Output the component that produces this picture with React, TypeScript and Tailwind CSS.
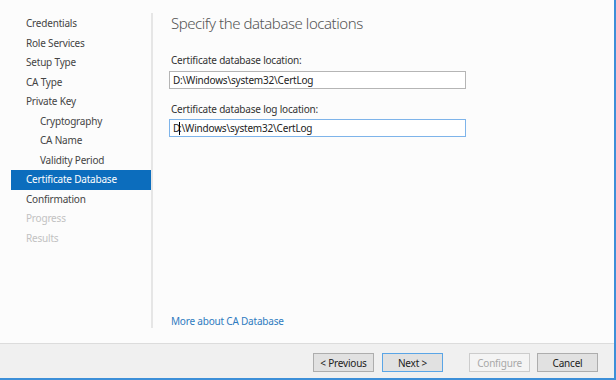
const font = { fontFamily: '"Noto Sans", "Open Sans", sans-serif' };

type NavItem = { label: string; sub?: boolean; active?: boolean; disabled?: boolean };

const navItems: NavItem[] = [
  { label: "Credentials" },
  { label: "Role Services" },
  { label: "Setup Type" },
  { label: "CA Type" },
  { label: "Private Key" },
  { label: "Cryptography", sub: true },
  { label: "CA Name", sub: true },
  { label: "Validity Period", sub: true },
  { label: "Certificate Database", active: true },
  { label: "Confirmation" },
  { label: "Progress", disabled: true },
  { label: "Results", disabled: true },
];

function WizardButton({
  children,
  primary = false,
  disabled = false,
}: {
  children: React.ReactNode;
  primary?: boolean;
  disabled?: boolean;
}) {
  return (
    <button
      className={`flex h-[19px] w-[61px] items-center justify-center border text-[10px] leading-none tracking-[-0.2px] ${
        disabled
          ? "border-[#cccccc] bg-[#f4f4f4] text-[#a8a8a8]"
          : primary
            ? "border-[#5aa5e6] bg-[#e1e1e1] text-[#222]"
            : "border-[#adadad] bg-[#e1e1e1] text-[#222]"
      }`}
    >
      {children}
    </button>
  );
}

export default function App() {
  return (
    <div
      style={font}
      className="flex h-[380px] w-[616px] flex-col overflow-hidden border-b-2 border-r-2 border-[#3d8fd8] bg-[#fcfcfc] tracking-[-0.2px]"
    >
      {/* Main area */}
      <div className="flex h-[343px]">
        {/* Steps */}
        <nav className="w-[151px] pl-[11px] pt-[14px]">
          {navItems.map((item) => (
            <div
              key={item.label}
              className={`flex h-[19.5px] items-center text-[10px] ${item.sub ? "pl-[29px]" : "pl-[15px]"} ${
                item.active
                  ? "bg-[#0c6dbd] text-white"
                  : item.disabled
                    ? "text-[#c2c2c2]"
                    : "text-[#444]"
              }`}
            >
              {item.label}
            </div>
          ))}
        </nav>

        {/* Page content */}
        <div className="mt-[13px] flex h-[315px] w-[297px] flex-col border-l-2 border-[#e6e6e6] pl-[16px]">
          <h1 className="ml-[2px] text-[15px] font-light leading-[20px] tracking-[-0.45px] text-[#555]">
            Specify the database locations
          </h1>

          <label className="ml-[2px] mt-[19px] text-[10px] leading-[16px] text-[#333]">
            Certificate database location:
          </label>
          <div className="mt-[3px] flex h-[18px] w-[297px] shrink-0 items-center border border-[#b5b5b5] bg-white pl-[3px] text-[10px] text-[#222]">
            D:\Windows\system32\CertLog
          </div>

          <label className="ml-[2px] mt-[12px] text-[10px] leading-[16px] text-[#333]">
            Certificate database log location:
          </label>
          <div className="mt-[2px] flex h-[18px] w-[297px] shrink-0 items-center border border-[#7eb4ea] bg-white pl-[3px] text-[10px] text-[#222]">
            <span>D</span>
            <span className="mx-[-1px] h-[13px] w-px bg-black" />
            <span>:\Windows\system32\CertLog</span>
          </div>

          <a className="ml-[2px] mt-auto text-[10px] leading-[14px] text-[#2e7bc0]" href="#">
            More about CA Database
          </a>
        </div>
      </div>

      {/* Footer */}
      <div className="flex flex-1 justify-end border-t border-[#dcdcdc] bg-[#f0f0f0] pr-[16px] pt-[9px]">
        <div className="flex">
          <WizardButton>&lt; Previous</WizardButton>
          <div className="ml-[8px]">
            <WizardButton primary>Next &gt;</WizardButton>
          </div>
          <div className="ml-[26px]">
            <WizardButton disabled>Configure</WizardButton>
          </div>
          <div className="ml-[7px]">
            <WizardButton>Cancel</WizardButton>
          </div>
        </div>
      </div>
    </div>
  );
}
